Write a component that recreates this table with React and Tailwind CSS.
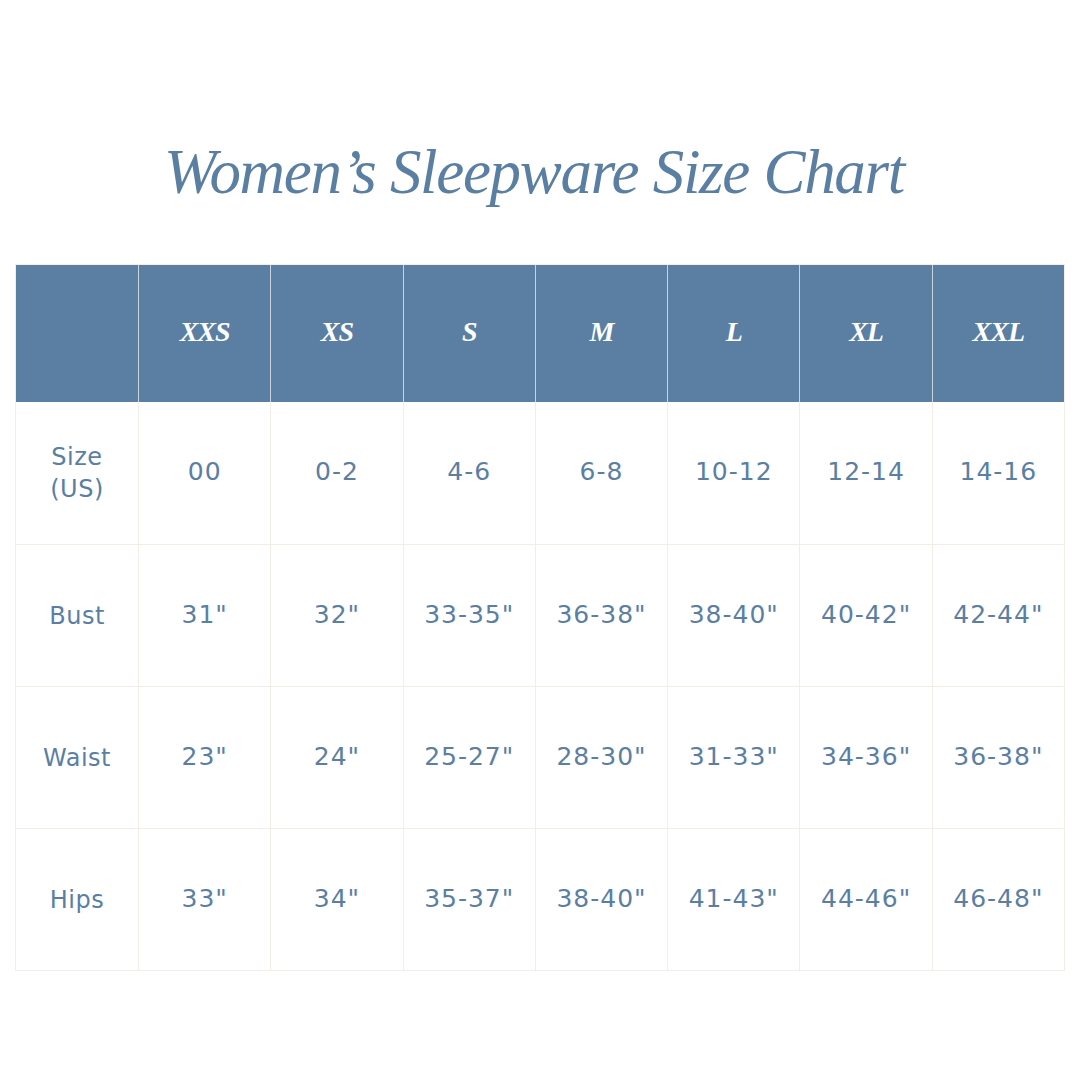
const sizes = ["XXS", "XS", "S", "M", "L", "XL", "XXL"];

const rows = [
  { label: ["Size", "(US)"], values: ["00", "0-2", "4-6", "6-8", "10-12", "12-14", "14-16"] },
  { label: ["Bust"], values: ['31"', '32"', '33-35"', '36-38"', '38-40"', '40-42"', '42-44"'] },
  { label: ["Waist"], values: ['23"', '24"', '25-27"', '28-30"', '31-33"', '34-36"', '36-38"'] },
  { label: ["Hips"], values: ['33"', '34"', '35-37"', '38-40"', '41-43"', '44-46"', '46-48"'] },
];

const cols = "grid grid-cols-[122px_repeat(7,1fr)]";

export default function App() {
  return (
    <div className="w-[1080px] h-[1080px] bg-white flex flex-col items-center">
      {/* title */}
      <h1 className="mt-[132px] mr-[12px] h-[80px] text-[63px] leading-[80px] italic text-[#5a7fa3] tracking-[-1.3px] font-['Liberation_Serif',serif]">
        Women’s Sleepware Size Chart
      </h1>

      <div className="mt-[52px] w-[1050px] border border-[#f3ede6] font-['DejaVu_Sans',sans-serif] text-[#5a7fa3]">
        {/* header row */}
        <div className={`${cols} h-[137px] bg-[#5a7fa3]`}>
          <div />
          {sizes.map((s) => (
            <div
              key={s}
              className="border-l border-[#c9d3dd] flex items-center justify-center pb-[4px] text-white text-[28px] font-bold italic tracking-[-1px] font-['Liberation_Serif',serif]"
            >
              {s}
            </div>
          ))}
        </div>

        {rows.map((row, i) => (
          <div key={i} className={`${cols} h-[142px] ${i > 0 ? "border-t border-[#f3ede6]" : ""}`}>
            <div className="flex flex-col items-center justify-center text-[24px] leading-[32px] tracking-[0.5px]">
              {row.label.map((l) => (
                <span key={l}>{l}</span>
              ))}
            </div>
            {row.values.map((v, j) => (
              <div
                key={j}
                className="border-l border-[#f3ede6] flex items-center justify-center pb-[2px] text-[25px] tracking-[1px]"
              >
                {v}
              </div>
            ))}
          </div>
        ))}
      </div>
    </div>
  );
}
